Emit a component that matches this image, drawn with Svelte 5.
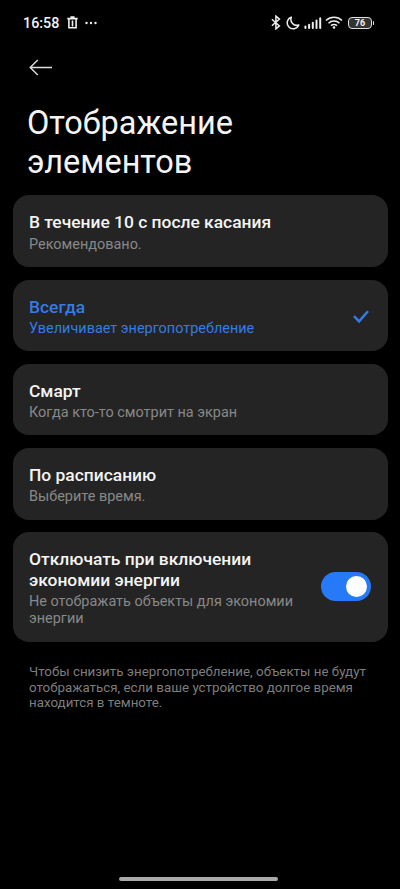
<script>
  const options = [
    { id: 'touch', title: 'В течение 10 с после касания', note: 'Рекомендовано.' },
    { id: 'always', title: 'Всегда', note: 'Увеличивает энергопотребление' },
    { id: 'smart', title: 'Смарт', note: 'Когда кто-то смотрит на экран' },
    { id: 'schedule', title: 'По расписанию', note: 'Выберите время.' },
  ];

  let selected = $state('always');
  let powerSaving = $state(true);
</script>

<div class="screen">
  <div class="status-bar">
    <span class="time">16:58</span>
    <svg class="trash" width="11" height="13" viewBox="0 0 11 13">
      <path d="M.3 2.6h10.4M3.4 1.2h4.2" stroke="#eee" stroke-width="1.8" fill="none" />
      <path d="M1.9 2.8v8.9h7.2V2.8M5.5 4.4v6" stroke="#eee" stroke-width="1.6" fill="none" />
    </svg>
    <svg class="dots" width="13" height="4" viewBox="0 0 13 4" fill="#eee">
      <circle cx="1.5" cy="2" r="1.2" /><circle cx="6" cy="2" r="1.2" /><circle cx="10.5" cy="2" r="1.2" />
    </svg>
    <div class="indicators">
      <svg class="bluetooth" width="10" height="15" viewBox="0 0 10 15">
        <path d="M.9 4.2l7.5 6.7-3.5 3V1.1l3.5 3L.9 10.8" fill="none" stroke="#eee" stroke-width="1.5" />
      </svg>
      <svg class="moon" width="14" height="14" viewBox="0 0 14 14">
        <path d="M5.3 1.1A6 6 0 1 0 12.8 9 6 6 0 0 1 5.3 1.1z" fill="none" stroke="#eee" stroke-width="1.5" stroke-linejoin="round" />
      </svg>
      <svg class="signal" width="18" height="12" viewBox="0 0 18 12">
        <path d="M1.4 9.6v1.3M5.1 7.8v3.1M8.8 5.8v5.1M12.5 3.6v7.3M16.2 1.2v9.7" stroke="#eee" stroke-width="2" stroke-linecap="round" />
      </svg>
      <svg class="wifi" width="18" height="13" viewBox="0 0 18 13">
        <path d="M1 4.5a11.6 11.6 0 0 1 16 0M3.5 7.2a7.9 7.9 0 0 1 11 0M6 9.7a4.4 4.4 0 0 1 6 0" fill="none" stroke="#eee" stroke-width="1.6" />
        <circle cx="9" cy="11.5" r="1.3" fill="#eee" />
      </svg>
      <div class="battery"><span>76</span></div>
    </div>
  </div>

  <button class="back" aria-label="Назад">
    <svg width="24" height="18" viewBox="0 0 24 18">
      <path d="M23 9.5H1.2M8.8 2L1.2 9.5l7.6 7.5" fill="none" stroke="#ddd" stroke-width="1.4" />
    </svg>
  </button>

  <h1>Отображение элементов</h1>

  <div class="cards">
    {#each options as option (option.id)}
      <button class="card" class:selected={selected === option.id} onclick={() => (selected = option.id)}>
        <span class="text">
          <span class="title">{option.title}</span>
          <span class="note">{option.note}</span>
        </span>
        {#if selected === option.id}
          <svg class="check" width="16" height="14" viewBox="0 0 16 14">
            <path d="M1.7 6.8l4.4 4.5L14.3 2" fill="none" stroke="#357be5" stroke-width="2.5" stroke-linecap="round" stroke-linejoin="miter" />
          </svg>
        {/if}
      </button>
    {/each}

    <button class="card" role="switch" aria-checked={powerSaving} onclick={() => (powerSaving = !powerSaving)}>
      <span class="text">
        <span class="title">Отключать при включении экономии энергии</span>
        <span class="note">Не отображать объекты для экономии энергии</span>
      </span>
      <span class="toggle" class:on={powerSaving}><span class="knob"></span></span>
    </button>
  </div>

  <p class="hint">Чтобы снизить энергопотребление, объекты не будут отображаться, если ваше устройство долгое время находится в темноте.</p>

  <div class="home-bar"></div>
</div>

<style>
  :global(body) { background: #000; }
  .screen { display: flex; flex-direction: column; box-sizing: border-box; width: 400px; height: 889px; background: #000; color: #f4f4f4; font-family: Roboto, sans-serif; overflow: hidden; }

  .status-bar { display: flex; align-items: center; height: 45px; padding: 0 26px 0 23px; flex-shrink: 0; }
  .time { font-size: 14.3px; font-weight: 500; line-height: 20px; width: 44px; }
  .dots { margin-left: 7px; }
  .indicators { display: flex; align-items: center; margin-left: auto; }
  .moon { margin-left: 5px; }
  .signal { margin-left: 4px; }
  .wifi { margin-left: 3px; }
  .battery { position: relative; display: flex; align-items: center; justify-content: center; box-sizing: border-box; width: 24px; height: 12px; margin: 0 2px 0 5px; border: 1.3px solid #ddd; border-radius: 4px; background: #333; font-size: 9px; font-weight: 700; line-height: 10px; }
  .battery::after { content: ''; position: absolute; right: -3px; top: 3px; width: 1.3px; height: 4px; border-radius: 1px; background: #ddd; }

  button { border: none; padding: 0; font: inherit; color: inherit; text-align: left; cursor: pointer; }
  .back { display: flex; align-items: center; width: 24px; height: 44px; margin-left: 29px; background: none; flex-shrink: 0; }

  h1 { width: 260px; margin: 15.4px 0 0 27px; font-size: 32.5px; font-weight: 400; line-height: 38.3px; }

  .cards { display: flex; flex-direction: column; gap: 12.5px; margin: 14.4px 12.5px 0; }
  .card { display: flex; align-items: center; justify-content: space-between; box-sizing: border-box; padding: 17px 16.5px 14.3px; border-radius: 16px; background: #242424; }
  .text { display: flex; flex-direction: column; gap: 2.7px; max-width: 272px; }
  .title { font-size: 17.42px; font-weight: 500; line-height: 20.5px; }
  .note { font-size: 14.45px; line-height: 17.2px; color: #888; }
  .selected .title, .selected .note { color: #357be5; }
  .check { margin-right: 2px; }
  .toggle { display: flex; align-items: center; box-sizing: border-box; width: 50px; height: 29px; padding: 0 4px; margin-bottom: 3px; border-radius: 15px; background: #555; flex-shrink: 0; }
  .toggle.on { justify-content: flex-end; background: #277af7; }
  .knob { width: 21px; height: 21px; border-radius: 50%; background: #fff; }

  .hint { width: 345px; margin: 22.4px 0 0 29px; font-size: 13.35px; line-height: 15.6px; color: #7d7d7d; }
  .home-bar { width: 159px; height: 4px; margin: auto auto 8px 119px; border-radius: 2px; background: #aaa; }
</style>
